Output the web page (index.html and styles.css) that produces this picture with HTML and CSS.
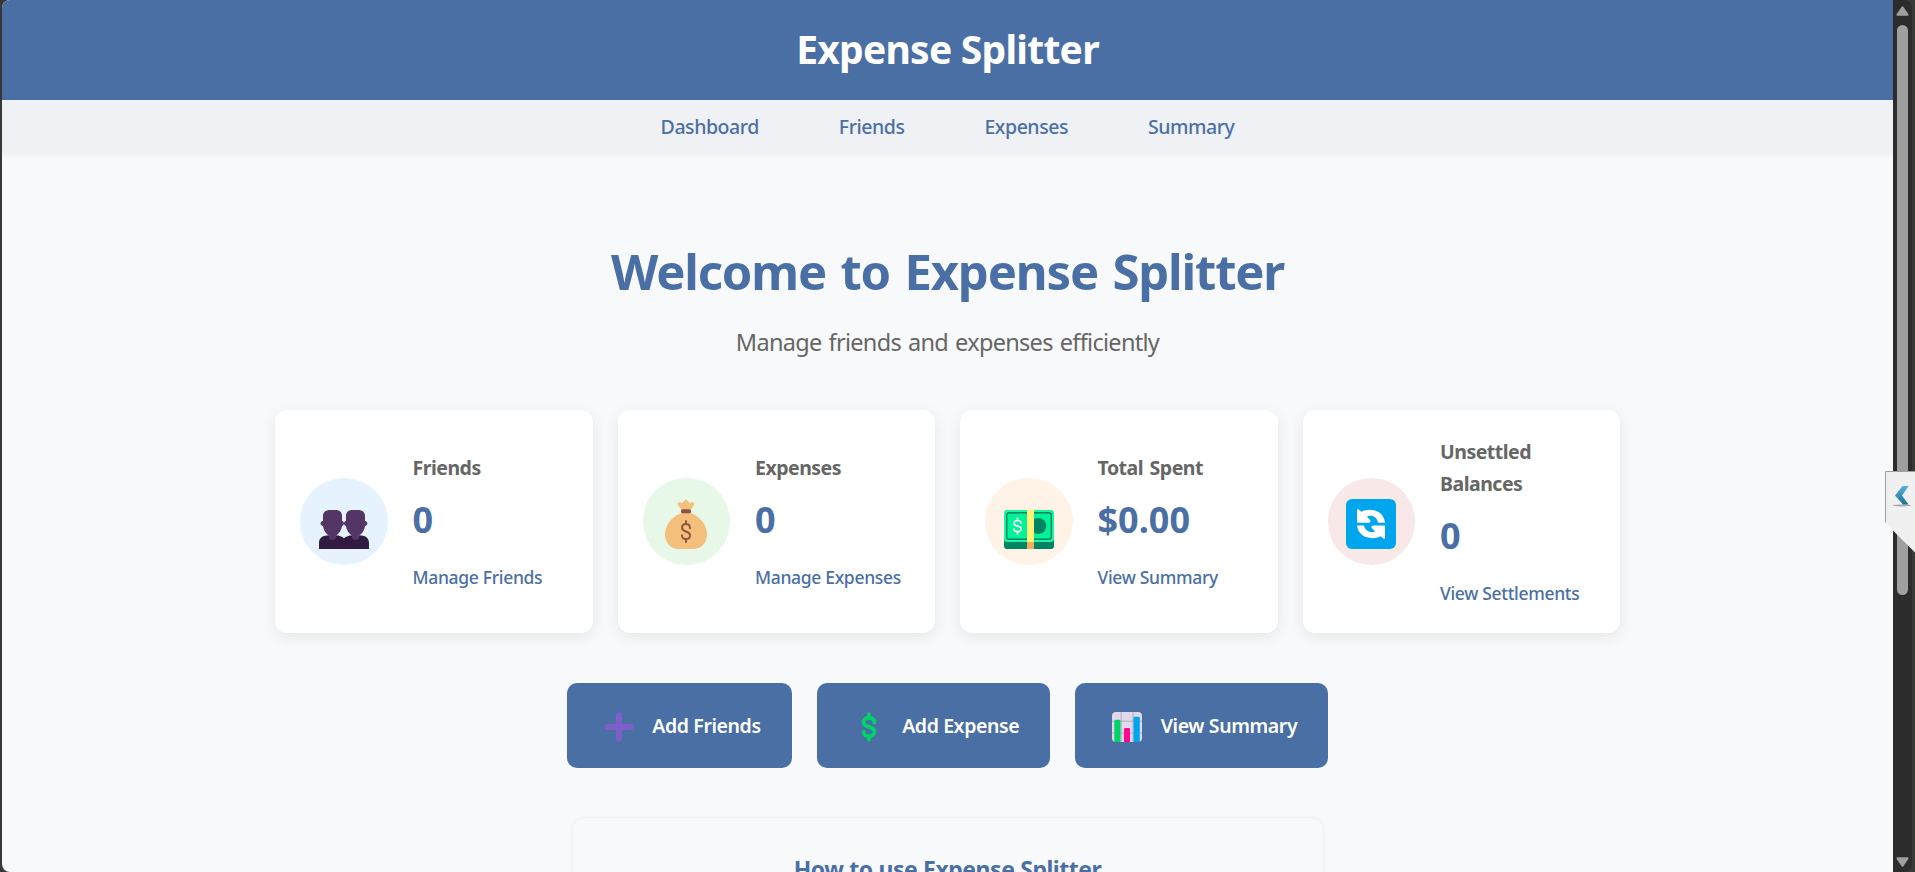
FILE: index.html
```
<!DOCTYPE html>
<html lang="en">
<head>
<meta charset="utf-8">
<title>Expense Splitter</title>
<link rel="stylesheet" href="styles.css">
</head>
<body>
<div class="window">
  <div class="page">
    <header class="header"><h1 class="header-title">Expense Splitter</h1></header>
    <nav class="nav">
      <a class="nav-link">Dashboard</a>
      <a class="nav-link">Friends</a>
      <a class="nav-link">Expenses</a>
      <a class="nav-link">Summary</a>
    </nav>
    <main class="main">
      <h2 class="welcome">Welcome to Expense Splitter</h2>
      <p class="subtitle">Manage friends and expenses efficiently</p>

      <section class="cards">
        <article class="card">
          <div class="card-icon blue">
            <svg class="emoji" viewBox="0 0 50 50">
              <path fill="#321b41" d="M0 50V44C0 38.500 4 36.500 10 36.300H17C20 36.500 23 37.500 25 39.300C27 37.500 30 36.500 33 36.300H40C46 36.500 50 38.500 50 44V50Z"/>
              <path fill="#533566" d="M4 22V17C4 13 7 11 11 11H16.500C20.500 11 23 13 23 17V22C25.600 22.300 25.600 26.500 23 27C22.500 31 20 35 17 36.300V38C17 42 9.700 42 9.700 38V36.300C7 35 4.500 31 4 27C.8 26.500 .8 22.300 4 22Z"/>
              <path fill="#533566" d="M27 22V17C27 13 29.500 11 33.500 11H39C43 11 46 13 46 17V22C49.200 22.300 49.200 26.500 46 27C45.500 31 43 35 40.300 36.300V38C40.300 42 33 42 33 38V36.300C30 35 27.500 31 27 27C24.400 26.500 24.400 22.300 27 22Z"/>
            </svg>
          </div>
          <div class="card-body">
            <h3 class="card-title">Friends</h3>
            <p class="card-value">0</p>
            <a class="card-link">Manage Friends</a>
          </div>
        </article>
        <article class="card">
          <div class="card-icon green">
            <svg class="emoji" viewBox="0 0 50 50">
              <path fill="#f3bf7a" d="M20.500 11L17 6C15.800 4 17.500 2.600 19.500 3.500L21.500 4L23.500 1.500Q25 .2 26.500 1.500L28.500 4L30.500 3.500C32.500 2.600 34.200 4 33 6L29.500 11Z"/>
              <path fill="#f3bf7a" d="M25 13.500C35 13.500 46 24 46 35.500C46 44 40 50 32 50H18C10 50 4 44 4 35.500C4 24 15 13.500 25 13.500Z"/>
              <rect x="20" y="10.200" width="10" height="4" rx="1.500" fill="#8c5543"/>
              <path fill="none" stroke="#8c5543" stroke-width="1.900" stroke-linecap="round" d="M25 22V25M25 40V43M29 29.300C29 26.300 27 25 25 25C22.700 25 21 26.500 21 28.700C21 33.500 29 31.500 29 36.400C29 38.500 27.300 40 25 40C22.700 40 21 38.500 21 36.200"/>
            </svg>
          </div>
          <div class="card-body">
            <h3 class="card-title">Expenses</h3>
            <p class="card-value">0</p>
            <a class="card-link">Manage Expenses</a>
          </div>
        </article>
        <article class="card">
          <div class="card-icon orange">
            <svg class="emoji" viewBox="0 0 50 50">
              <rect y="30" width="50" height="20" rx="3" fill="#008463"/>
              <rect y="11" width="50" height="32" rx="3" fill="#1bf4a0"/>
              <rect x="2.700" y="13.700" width="44.600" height="26.600" rx="2.500" fill="#00f397" stroke="#008463" stroke-width="1.400"/>
              <circle cx="34.300" cy="27" r="8" fill="#008463"/>
              <path fill="#fff478" d="M23 11H30V43H23Z"/><path fill="#f3ad61" d="M23 43H30V50H23Z"/>
              <path fill="none" stroke="#fff" stroke-width="1.600" stroke-linecap="round" d="M13.500 19V21.500M13.500 32.500V35.200M17 24.500C17 22.600 15.500 21.500 13.500 21.500C11.500 21.500 10 22.600 10 24.300C10 28 17.200 26.300 17.200 29.800C17.200 31.500 15.500 32.600 13.500 32.600C11.500 32.600 10 31.500 10 29.700"/>
            </svg>
          </div>
          <div class="card-body">
            <h3 class="card-title">Total Spent</h3>
            <p class="card-value">$0.00</p>
            <a class="card-link">View Summary</a>
          </div>
        </article>
        <article class="card">
          <div class="card-icon red">
            <svg class="emoji" viewBox="0 0 50 50">
              <rect width="50" height="50" rx="6" fill="#00a6ed"/>
              <path fill="#fff" d="M11 11.200Q11.300 9.300 13 10.700L15.200 12.800C24 8.500 37.500 11 39 23.700H32C31 18 26 15.500 20.800 17.500L24 21Q25.500 23.300 23 23.700H11Z"/>
              <path fill="#fff" d="M39 38.800Q38.700 40.700 37 39.300L34.800 37.200C26 41.500 12.500 39 11 26.600H18C19 32 24 34.500 29.200 32.500L26 29.300Q24.500 27 27 26.600H39Z"/>
            </svg>
          </div>
          <div class="card-body">
            <h3 class="card-title">Unsettled Balances</h3>
            <p class="card-value">0</p>
            <a class="card-link">View Settlements</a>
          </div>
        </article>
      </section>

      <div class="actions">
        <a class="button">
          <svg class="button-icon" viewBox="0 0 42 42"><path d="M21 9.200V32.800M9.200 21H32.800" stroke="#7d5fc9" stroke-width="6" stroke-linecap="round"/></svg>
          Add Friends
        </a>
        <a class="button">
          <svg class="button-icon" viewBox="0 0 42 42"><path fill="none" stroke="#00d26a" stroke-width="3.900" stroke-linecap="round" d="M21 8.200V11.500M21 30.500V33.800M26.400 16.400C26.400 13.500 24 11.700 21 11.700C18 11.700 15.600 13.600 15.600 16.200C15.600 22.200 26.500 19.700 26.500 25.800C26.500 28.500 24.100 30.300 21 30.300C17.900 30.300 15.600 28.500 15.600 25.700"/></svg>
          Add Expense
        </a>
        <a class="button">
          <svg class="button-icon" viewBox="0 0 42 42">
            <rect x="6" y="6" width="30" height="30" rx="4" fill="#e1d8ec"/>
            <path fill="none" stroke="#b4acbc" d="M15.200 6V36M27 6V36M6 15.200H36M6 27H36"/>
            <path fill="#00d26a" d="M8.300 36V15Q8.300 13.700 9.600 13.700H13.200Q14.500 13.700 14.500 15V36Z"/>
            <path fill="#fc0a8e" d="M18 36V23.200Q18 22 19.200 22H22.800Q24 22 24 23.200V36Z"/>
            <path fill="#00a6ed" d="M27.500 36V12Q27.500 10.700 28.800 10.700H32.500Q33.800 10.700 33.800 12V36Z"/>
          </svg>
          View Summary
        </a>
      </div>

      <section class="howto"><h3 class="howto-title">How to use Expense Splitter</h3></section>
    </main>
  </div>
  <div class="scrollbar">
    <svg class="arrow" viewBox="0 0 13 10"><path fill="#9f9f9f" d="M5.700 .8Q6.500 -.2 7.300 .8L12.300 8Q13 9.700 11.500 9.700H1.500Q0 9.700 .7 8Z"/></svg>
    <div class="track"><div class="thumb"></div></div>
    <svg class="arrow" viewBox="0 0 13 10"><path fill="#9f9f9f" d="M5.700 9.200Q6.500 10.200 7.300 9.200L12.300 2Q13 .3 11.500 .3H1.500Q0 .3 .7 2Z"/></svg>
  </div>
  <svg class="side-tab" viewBox="0 0 30 82">
    <defs><linearGradient id="chev" x1="0" y1="0" x2="0" y2="1"><stop offset="0" stop-color="#5cb0de"/><stop offset="1" stop-color="#1c7199"/></linearGradient></defs>
    <path fill="#f0f0f0" d="M0 0H30V81.500L0 51.500Z"/>
    <path fill="none" stroke="#a0a0a0" d="M30 .5H.5V51.500"/>
    <ellipse cx="17" cy="34.400" rx="9" ry="1" fill="#a8a8a8"/>
    <path fill="url(#chev)" d="M17.500 15H23.700L17 24.500L23.500 33.500H18L10 24.500Z"/>
  </svg>
</div>
</body>
</html>
```
FILE: styles.css
```
* { box-sizing: border-box; margin: 0; padding: 0; }

body {
  font-family: "Noto Sans", "Open Sans", sans-serif;
  background: #383838;
  overflow: hidden;
}

.window {
  position: relative;
  display: flex;
  height: 872px;
  padding: 0 3px 0 2px;
  overflow: hidden;
}

.page {
  flex: 1;
  overflow: hidden;
  background: #f8f9fb;
  border-radius: 8px 0 0 8px;
}

.header {
  height: 100px;
  padding-top: 17px;
  background: #4a6fa5;
  text-align: center;
}

.header-title {
  font-size: 39px;
  line-height: 64px;
  letter-spacing: -0.75px;
  color: #fff;
}

.nav {
  display: flex;
  justify-content: center;
  gap: 80px;
  height: 53px;
  background: #f0f1f5;
  box-shadow: 0 2px 6px rgba(0, 0, 0, 0.05);
}

.nav-link {
  font-size: 19.5px;
  font-weight: 500;
  line-height: 53px;
  letter-spacing: -0.45px;
  color: #4a6fa5;
}

.main {
  width: 1345px;
  margin: 0 auto;
  padding-top: 88px;
}

.welcome {
  font-size: 49px;
  line-height: 60px;
  letter-spacing: -1.15px;
  word-spacing: 2.8px;
  text-align: center;
  color: #4a6fa5;
}

.subtitle {
  margin-top: 22px;
  font-size: 23.5px;
  line-height: 38px;
  letter-spacing: -0.7px;
  word-spacing: 1.6px;
  text-align: center;
  color: #666;
}

.cards {
  display: grid;
  grid-template-columns: repeat(4, 1fr);
  gap: 25px;
  margin-top: 49px;
}

.card {
  display: flex;
  align-items: center;
  gap: 25px;
  height: 223px;
  padding: 0 25px;
  border-radius: 12px;
  background: #fff;
  box-shadow: 0 4px 15px rgba(0, 0, 0, 0.08);
}

.card-icon {
  display: flex;
  flex: none;
  align-items: center;
  justify-content: center;
  width: 87.5px;
  height: 87.5px;
  padding-top: 5px;
  border-radius: 50%;
}

.blue { background: #e6f3fe; }
.green { background: #e7f7e8; }
.orange { background: #fff3e7; }
.red { background: #f8e8e8; }

.emoji { width: 50px; height: 50px; }

.card-body { flex: 1; }

.card-title {
  font-size: 19.5px;
  line-height: 32px;
  letter-spacing: -0.5px;
  word-spacing: 2px;
  color: #666;
}

.card-value {
  margin: 8px 0 15px;
  font-size: 36px;
  font-weight: 700;
  line-height: 56px;
  color: #4a6fa5;
}

.card-link {
  display: block;
  margin-bottom: 1px;
  font-size: 17.5px;
  font-weight: 500;
  line-height: 28px;
  letter-spacing: -0.32px;
  white-space: nowrap;
  color: #4a6fa5;
}

.actions {
  display: flex;
  justify-content: center;
  gap: 25px;
  margin-top: 50px;
}

.button {
  display: flex;
  align-items: center;
  gap: 12.5px;
  height: 85px;
  padding: 0 31px;
  border-radius: 10px;
  background: #4a6fa5;
  font-size: 19.5px;
  font-weight: 600;
  letter-spacing: -0.4px;
  color: #fff;
}

.button-icon { width: 42px; height: 42px; margin-top: 2px; }

.howto {
  width: 750px;
  height: 300px;
  margin: 50px auto 0;
  padding-top: 32px;
  border-radius: 12px;
  background: #f8f9fb;
  box-shadow: 0 0 4px rgba(0, 0, 0, 0.07);
}

.howto-title {
  font-size: 23px;
  line-height: 38px;
  letter-spacing: -0.48px;
  word-spacing: 0.3px;
  text-align: center;
  color: #4a6fa5;
}

.scrollbar {
  display: flex;
  flex-direction: column;
  align-items: center;
  width: 19px;
  padding: 6px 0 5px;
  border-radius: 0 8px 8px 0;
  background: #2c2c2c;
}

.arrow { width: 13px; height: 10px; }

.track { flex: 1; padding-top: 9px; }

.thumb {
  width: 11px;
  height: 570px;
  border-radius: 6px;
  background: #9f9f9f;
}

.side-tab {
  position: absolute;
  top: 471px;
  right: 0;
  width: 30px;
  height: 82px;
}
```
